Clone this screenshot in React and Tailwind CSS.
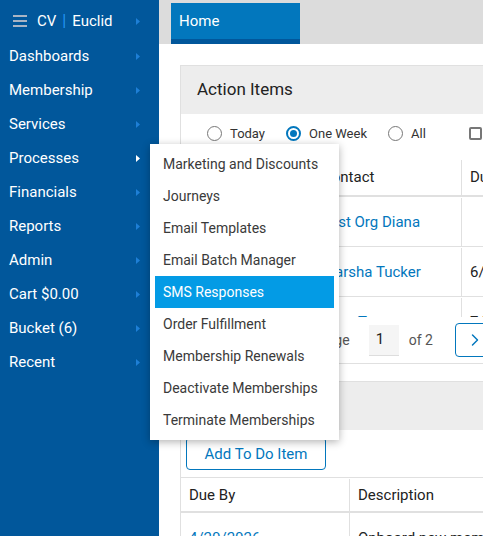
import { ChevronRight } from "lucide-react";

const NAV = [
  "Dashboards",
  "Membership",
  "Services",
  "Processes",
  "Financials",
  "Reports",
  "Admin",
  "Cart $0.00",
  "Bucket (6)",
  "Recent",
];

const MENU = [
  "Marketing and Discounts",
  "Journeys",
  "Email Templates",
  "Email Batch Manager",
  "SMS Responses",
  "Order Fulfillment",
  "Membership Renewals",
  "Deactivate Memberships",
  "Terminate Memberships",
];

function Caret({ active }) {
  return (
    <svg width="4" height="7" viewBox="0 0 4 7">
      <path d="M0 0L4 3.5L0 7Z" fill={active ? "#ffffff" : "#1e7fd6"} />
    </svg>
  );
}

function Radio({ checked, label }) {
  return (
    <div className="flex items-center gap-[8px]">
      {checked ? (
        <span className="w-[15px] h-[15px] rounded-full border-2 border-[#0277bd] flex items-center justify-center">
          <span className="w-[7px] h-[7px] rounded-full bg-[#0277bd]" />
        </span>
      ) : (
        <span className="w-[15px] h-[15px] rounded-full border-[1.5px] border-[#777]" />
      )}
      <span className="text-[13px] text-[#333]">{label}</span>
    </div>
  );
}

export default function App() {
  return (
    <div className="relative w-[483px] h-[536px] overflow-hidden flex font-['Roboto','Liberation_Sans',sans-serif]">
      {/* Sidebar */}
      <div className="w-[159px] shrink-0 bg-[#01579b] pt-[4px]">
        <div className="h-[34px] flex items-center justify-between pl-[13px] pr-[19px]">
          <div className="flex items-center">
            <div className="flex flex-col gap-[3px] w-[14px]">
              <span className="h-[2px] bg-[#a8b4c4]" />
              <span className="h-[2px] bg-[#a8b4c4]" />
              <span className="h-[2px] bg-[#a8b4c4]" />
            </div>
            <span className="ml-[10px] text-[15px] text-white">CV</span>
            <span className="mx-[6px] text-[16px] text-[#2196f3]">|</span>
            <span className="text-[15px] text-white">Euclid</span>
          </div>
          <Caret />
        </div>
        {NAV.map((item) => (
          <div
            key={item}
            className="h-[34px] pt-[2px] flex items-center justify-between pl-[9px] pr-[19px] text-[15px] text-white"
          >
            <span>{item}</span>
            <Caret active={item === "Processes"} />
          </div>
        ))}
      </div>

      {/* Main */}
      <div className="flex-1 min-w-0 overflow-hidden bg-white">
        <div className="h-[44px] bg-[#dcdcdc] pl-[12px] pt-[3px]">
          <div className="w-[129px] h-[41px] bg-[#0277bd] border-b-[5px] border-[#01579b] pl-[8px] pt-[1px] flex items-center text-[15px] text-white">
            Home
          </div>
        </div>

        <div className="w-[700px] pl-[21px] pt-[21px]">
          {/* Action Items card */}
          <div className="w-[600px] border border-[#e0e0e0]">
            <div className="h-[48px] bg-[#ededed] pl-[16px] flex items-center text-[17px] text-[#222]">
              Action Items
            </div>
            <div className="h-[46px] pt-[10px] pl-[26px] flex items-start gap-[21px]">
              <Radio label="Today" />
              <Radio checked label="One Week" />
              <Radio label="All" />
              <span className="ml-[22px] mt-[3px] w-[13px] h-[13px] border-2 border-[#777] rounded-[2px]" />
            </div>
            <div className="flex h-[37px] border-b-2 border-[#e0e0e0] text-[15px] text-[#222]">
              <div className="w-[132px] border-r border-[#e0e0e0] pl-[9px] flex items-center">Type</div>
              <div className="w-[149px] border-r border-[#e0e0e0] pl-[9px] flex items-center">Contact</div>
              <div className="flex-1 pl-[8px] flex items-center">Due Date</div>
            </div>
            <div className="h-[120px] overflow-hidden text-[15px]">
              {[
                ["Renewal", "Test Org Diana", ""],
                ["Follow Up", "Marsha Tucker", "6/15/2026"],
                ["Call", "Jane Tester", "7/01/2026"],
              ].map(([t, c, d]) => (
                <div key={c} className="flex h-[50px] pt-[1px] border-b border-[#e0e0e0]">
                  <div className="w-[132px] border-r border-[#e0e0e0] pl-[9px] flex items-center text-[#222]">{t}</div>
                  <div className="w-[149px] border-r border-[#e0e0e0] pl-[9px] flex items-center text-[#0277bd]">{c}</div>
                  <div className="flex-1 pl-[8px] flex items-center text-[#222]">{d}</div>
                </div>
              ))}
            </div>
            <div className="h-[46px] pl-[137px] flex items-center text-[14px] text-[#555]">
              <span>Page</span>
              <span className="ml-[19px] w-[30px] h-[31px] bg-[#f5f5f5] border-b border-[#ddd] pl-[7px] flex items-center text-[15px] text-[#222]">
                1
              </span>
              <span className="ml-[10px]">of 2</span>
              <span className="ml-[22px] w-[40px] h-[34px] border border-[#0277bd] rounded-[4px] flex items-center justify-center text-[#0277bd]">
                <ChevronRight size={20} strokeWidth={1.75} />
              </span>
            </div>
          </div>

          {/* To Do card */}
          <div className="mt-[17px] w-[600px] border border-[#e0e0e0]">
            <div className="h-[48px] bg-[#ededed] pl-[16px] flex items-center text-[17px] text-[#222]">
              To Do Items
            </div>
            <div className="pt-[7px] pl-[5px]">
              <button className="w-[140px] h-[33px] border border-[#0277bd] rounded-[4px] pt-[2px] text-[15px] text-[#0277bd]">
                Add To Do Item
              </button>
            </div>
            <div className="mt-[7px] border-t border-[#e0e0e0] flex h-[36px] pt-[1px] border-b-2 text-[15px] text-[#222]">
              <div className="w-[169px] border-r border-[#e0e0e0] pl-[8px] flex items-center">Due By</div>
              <div className="flex-1 pl-[8px] flex items-center">Description</div>
            </div>
            <div className="flex h-[50px] text-[15px]">
              <div className="w-[169px] border-r border-[#e0e0e0] pl-[8px] flex items-center text-[#0277bd]">4/20/2026</div>
              <div className="flex-1 pl-[8px] flex items-center text-[#222]">Onboard new member</div>
            </div>
          </div>
        </div>
      </div>

      {/* Processes submenu */}
      <div className="absolute left-[150px] top-[144px] w-[189px] bg-white px-[5px] py-[4px] shadow-[0_2px_8px_rgba(0,0,0,0.3)]">
        {MENU.map((m) => (
          <div
            key={m}
            className={`h-[32px] pl-[8px] flex items-center text-[14px] ${
              m === "SMS Responses" ? "bg-[#039be5] text-white" : "text-[#3a3a3a]"
            }`}
          >
            {m}
          </div>
        ))}
      </div>
    </div>
  );
}
